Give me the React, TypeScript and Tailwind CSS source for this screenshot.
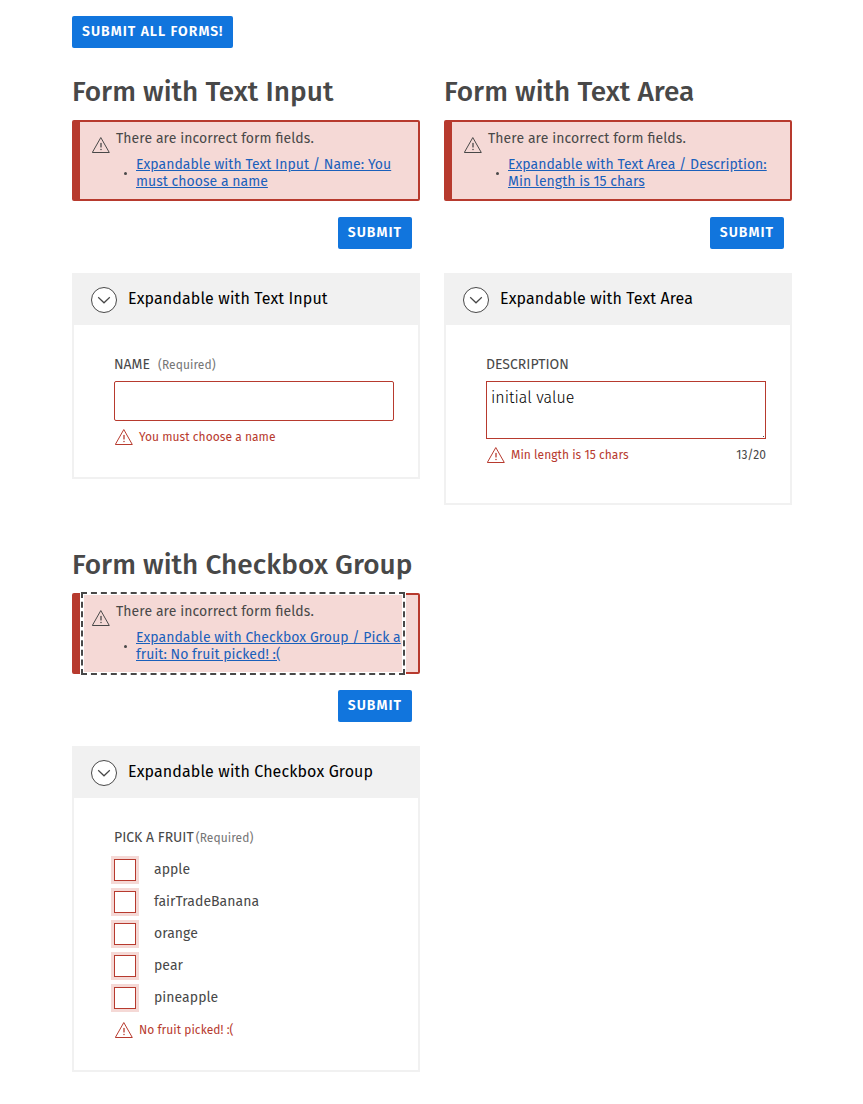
import type { ReactNode } from 'react';

function WarningIcon({ className = '' }: { className?: string }) {
  return (
    <svg
      viewBox="0 0 18 16"
      width="18"
      height="16"
      fill="none"
      stroke="currentColor"
      strokeWidth="1"
      strokeLinejoin="round"
      strokeLinecap="round"
      className={`shrink-0 ${className}`}
      aria-hidden="true"
    >
      <path d="M9 0.9 L17.3 15.5 H0.7 Z" />
      <path d="M9 6.4 V9.9" strokeWidth="1.3" />
      <path d="M9 12.4 V12.6" strokeWidth="1.5" />
    </svg>
  );
}

function ChevronCircle() {
  return (
    <svg viewBox="0 0 26 26" width="26" height="26" fill="none" className="shrink-0" aria-hidden="true">
      <circle cx="13" cy="13" r="12.5" fill="#fff" stroke="#484848" />
      <path d="M7.2 10.2 L13 15.8 L18.8 10.2" stroke="#484848" strokeWidth="1.2" />
    </svg>
  );
}

function SubmitButton({ children }: { children: ReactNode }) {
  return (
    <button
      type="button"
      className="h-8 rounded-[2px] bg-[#1175dd] px-[10px] pb-px text-[14px] leading-[17px] font-semibold tracking-[1px] text-white"
    >
      {children}
    </button>
  );
}

function Alert({ message, focused }: { message: string; focused?: boolean }) {
  return (
    <div className="relative flex h-[81px] rounded-[2px] border-2 border-l-8 border-[#b73a2e] bg-[#f5d9d6] pt-2 pl-3">
      <WarningIcon className="mt-[7px]" />
      <div className="ml-[6px] w-[288px] text-[14px] leading-[17px] [font-feature-settings:'liga']">
        <p className="tracking-[0.08px]">There are incorrect form fields.</p>
        <div className="mt-[9px] flex items-center">
          <span className="mr-[9px] ml-2 size-[3px] shrink-0 rounded-full bg-[#484848]" />
          <a href="#field" className="w-[268px] tracking-[0.03px] text-[#1a60bb] underline">
            {message}
          </a>
        </div>
      </div>
      {focused && (
        <div className="pointer-events-none absolute -top-1 left-0 h-[85px] w-[326px] border-4 border-white">
          <div className="absolute inset-[-3px] border-2 border-dashed border-[#484848]" />
        </div>
      )}
    </div>
  );
}

function FieldError({ children }: { children: ReactNode }) {
  return (
    <div className="ml-px flex items-center text-[12px] leading-4 text-[#b73a2e]">
      <WarningIcon />
      <span className="ml-[6px] tracking-[0.04px]">{children}</span>
    </div>
  );
}

interface FormSectionProps {
  title: string;
  message: string;
  panelTitle: string;
  focused?: boolean;
  panelHeight: string;
  children: ReactNode;
}

function FormSection({ title, message, panelTitle, focused, panelHeight, children }: FormSectionProps) {
  return (
    <section>
      <h2 className="h-12 text-[28px] leading-10 font-medium tracking-[0.03px] whitespace-nowrap">{title}</h2>
      <Alert message={message} focused={focused} />
      <div className="mt-4 mr-2 flex justify-end">
        <SubmitButton>SUBMIT</SubmitButton>
      </div>
      <div className={`mt-6 border-2 border-[#f1f1f1] ${panelHeight}`}>
        <div className="flex h-[50px] items-center bg-[#f1f1f1] pl-[17px] text-base text-black">
          <ChevronCircle />
          <span className="ml-[11px] -translate-y-px tracking-[0.11px]">{panelTitle}</span>
        </div>
        <div className="pt-[31px] pr-6 pl-10">{children}</div>
      </div>
    </section>
  );
}

const fruits = ['apple', 'fairTradeBanana', 'orange', 'pear', 'pineapple'];

export default function App() {
  return (
    <main className="min-h-[1104px] bg-white pt-4 pl-[72px] font-['Fira_Sans','Noto_Sans',sans-serif] text-[#484848]">
      <SubmitButton>SUBMIT ALL FORMS!</SubmitButton>
      <div className="mt-6 grid grid-cols-[348px_348px] items-start gap-x-6 gap-y-10">
        <FormSection
          title="Form with Text Input"
          message="Expandable with Text Input / Name: You must choose a name"
          panelTitle="Expandable with Text Input"
          panelHeight="h-[206px]"
        >
          <label htmlFor="name" className="flex h-[17px] items-baseline text-[14px] leading-[17px]">
            NAME <span className="ml-2 text-[12px] tracking-[0.08px] text-[#757575]">(Required)</span>
          </label>
          <input id="name" className="mt-2 mb-2 block h-10 w-full rounded-[2px] border border-[#b73a2e] px-2 outline-none" />
          <FieldError>You must choose a name</FieldError>
        </FormSection>

        <FormSection
          title="Form with Text Area"
          message="Expandable with Text Area / Description: Min length is 15 chars"
          panelTitle="Expandable with Text Area"
          panelHeight="h-[232px]"
        >
          <label htmlFor="description" className="block text-[14px] leading-[17px]">
            DESCRIPTION
          </label>
          <div className="relative mt-2 mb-2">
            <textarea
              id="description"
              defaultValue="initial value"
              className="block h-[58px] w-full resize-none border border-[#b73a2e] px-1 py-[6px] text-base leading-5 font-light text-black outline-none"
            />
            <span className="absolute right-[2px] bottom-[2px] size-px bg-[#484848]" />
          </div>
          <div className="flex justify-between">
            <FieldError>Min length is 15 chars</FieldError>
            <span className="text-[12px] leading-4 tracking-[0.1px]">13/20</span>
          </div>
        </FormSection>

        <FormSection
          title="Form with Checkbox Group"
          message="Expandable with Checkbox Group / Pick a fruit: No fruit picked! :("
          panelTitle="Expandable with Checkbox Group"
          panelHeight="h-[326px]"
          focused
        >
          <div className="flex h-[17px] items-baseline text-[14px] leading-[17px]">
            PICK A FRUIT <span className="ml-[2px] text-[12px] tracking-[0.08px] text-[#757575]">(Required)</span>
          </div>
          <div className="mt-[7px] mb-[9px]">
            {fruits.map((fruit) => (
              <label key={fruit} className="flex h-8 items-center text-[14px] leading-[17px]">
                <input
                  type="checkbox"
                  className="size-[22px] translate-y-px appearance-none border border-[#b73a2e] bg-white shadow-[0_0_0_3px_#f5d9d6]"
                />
                <span className="ml-[18px] tracking-[0.04px]">{fruit}</span>
              </label>
            ))}
          </div>
          <FieldError>No fruit picked! :(</FieldError>
        </FormSection>
      </div>
    </main>
  );
}
